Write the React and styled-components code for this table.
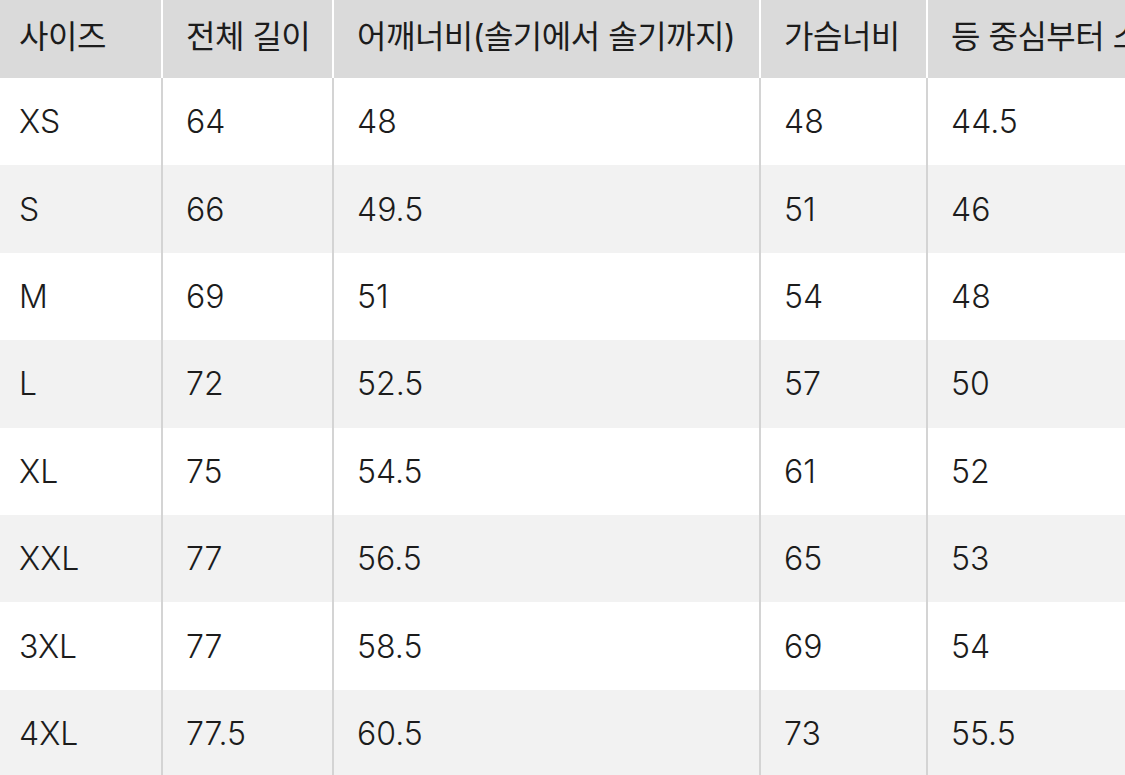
import React from "react";
import styled, { createGlobalStyle } from "styled-components";

const GlobalStyle = createGlobalStyle`
  html, body {
    margin: 0;
    padding: 0;
    background: #ffffff;
    overflow: hidden;
  }
`;

const headers = [
  "사이즈",
  "전체 길이",
  "어깨너비(솔기에서 솔기까지)",
  "가슴너비",
  "등 중심부터 소매길이",
];

const rows = [
  ["XS", "64", "48", "48", "44.5"],
  ["S", "66", "49.5", "51", "46"],
  ["M", "69", "51", "54", "48"],
  ["L", "72", "52.5", "57", "50"],
  ["XL", "75", "54.5", "61", "52"],
  ["XXL", "77", "56.5", "65", "53"],
  ["3XL", "77", "58.5", "69", "54"],
  ["4XL", "77.5", "60.5", "73", "55.5"],
];

const Page = styled.div`
  width: 1125px;
  height: 775px;
  overflow: hidden;
  font-family: Inter, "Noto Sans CJK KR", sans-serif;
  color: #1c1c1c;
`;

const Table = styled.div`
  width: 1300px;
  display: flex;
  flex-direction: column;
`;

const Row = styled.div`
  display: grid;
  grid-template-columns: 161px 171px 427px 167px 1fr;
  height: ${({ $head }) => ($head ? "78px" : "87.4px")};
  background: ${({ $head, $striped }) =>
    $head ? "#dadada" : $striped ? "#f2f2f2" : "#ffffff"};
`;

const Cell = styled.div`
  display: flex;
  align-items: center;
  padding-left: ${({ $first }) => ($first ? "19px" : "23px")};
  border-left: ${({ $first, $head }) =>
    $first ? "none" : `2px solid ${$head ? "#ffffff" : "#d4d4d4"}`};
  font-size: 32px;
  font-weight: ${({ $head }) => ($head ? 400 : 300)};
  white-space: nowrap;
  overflow: hidden;
  padding-bottom: ${({ $head }) => ($head ? "10px" : "0")};
  letter-spacing: ${({ $head }) => ($head ? "-0.5px" : "0")};
`;

export default function App() {
  return (
    <Page>
      <GlobalStyle />
      <Table>
        <Row $head>
          {headers.map((h, i) => (
            <Cell key={h} $head $first={i === 0}>
              {h}
            </Cell>
          ))}
        </Row>
        {rows.map((r, ri) => (
          <Row key={r[0]} $striped={ri % 2 === 1}>
            {r.map((v, i) => (
              <Cell key={i} $first={i === 0}>
                {v}
              </Cell>
            ))}
          </Row>
        ))}
      </Table>
    </Page>
  );
}
